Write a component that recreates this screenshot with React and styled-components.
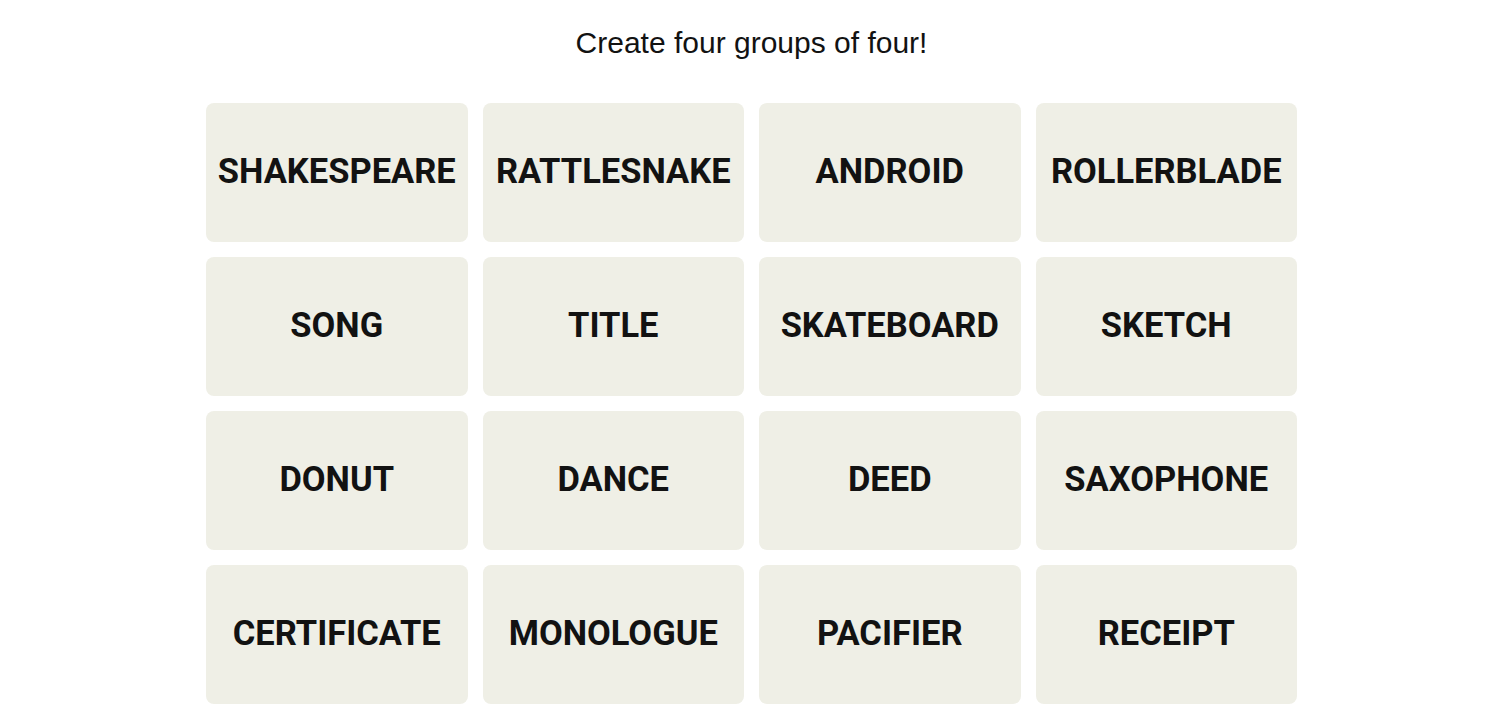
import styled, { createGlobalStyle } from 'styled-components';

const GlobalStyle = createGlobalStyle`
    body {
        margin: 0;
        background: #ffffff;
        font-family: "Liberation Sans", Arial, sans-serif;
        color: #121212;
    }
`;

const Page = styled.main`
    display: flex;
    flex-direction: column;
    align-items: center;
    padding: 24px 0 0 3px;
`;

const Heading = styled.h2`
    margin: 0 0 41px;
    font-family: "Liberation Sans", Arial, sans-serif;
    font-weight: 400;
    font-size: 30px;
    line-height: 38px;
    color: #121212;
`;

const Board = styled.section`
    display: grid;
    grid-template-columns: repeat(4, 261.5px);
    grid-auto-rows: 139px;
    gap: 15px 15px;
`;

const Tile = styled.button`
    display: flex;
    align-items: center;
    justify-content: center;
    border: none;
    border-radius: 8px;
    background: #efefe6;
    color: #121212;
    font-family: Roboto, "Liberation Sans", Arial, sans-serif;
    font-weight: 700;
    font-size: 34.5px;
    text-transform: uppercase;
    padding: 0 0 3px;
    cursor: pointer;
`;

const words = [
    "SHAKESPEARE", "RATTLESNAKE", "ANDROID", "ROLLERBLADE",
    "SONG", "TITLE", "SKATEBOARD", "SKETCH",
    "DONUT", "DANCE", "DEED", "SAXOPHONE",
    "CERTIFICATE", "MONOLOGUE", "PACIFIER", "RECEIPT",
];

export default function App() {
    return (
        <>
            <GlobalStyle />
            <Page>
                <Heading>Create four groups of four!</Heading>
                <Board>
                    {words.map((word) => (
                        <Tile key={word}>{word}</Tile>
                    ))}
                </Board>
            </Page>
        </>
    );
}
